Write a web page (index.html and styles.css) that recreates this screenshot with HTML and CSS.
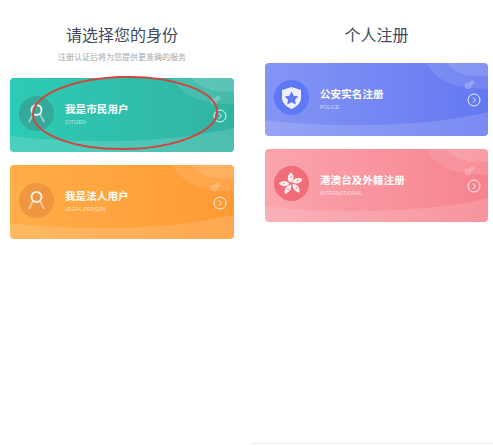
FILE: index.html
```html
<!DOCTYPE html>
<html lang="zh">
<head>
<meta charset="utf-8">
<title>注册</title>
<link rel="stylesheet" href="styles.css">
</head>
<body>
<main class="page">
  <section class="col col-left">
    <h1 class="title">请选择您的身份</h1>
    <p class="sub">注册认证后将为您提供更准确的服务</p>
    <div class="cards">
      <a class="card teal">
        <svg class="decor" viewBox="0 0 224 74" preserveAspectRatio="none"><path class="d1" d="M162 0C172 18 192 27 224 26V0Z"/><path class="d2" d="M182 0C190 11 206 15 224 13V0Z"/><circle class="d3" cx="204" cy="23" r="3.5"/><circle class="d3" cx="208" cy="20" r="2.5"/><path class="d4" d="M0 58C60 65 150 67 224 50V74H0Z"/></svg>
        <span class="badge"><svg viewBox="0 0 35 35"><circle class="w" cx="17.5" cy="14" r="5" fill="none" stroke-width="2"/><path class="w2" d="M14 18L10 26M21 18L25 26" fill="none" stroke-width="2"/></svg></span>
        <span class="txt"><b>我是市民用户</b><small>CITIZEN</small></span>
        <svg class="arrow" viewBox="0 0 14 14"><circle cx="7" cy="7" r="6"/><path d="M6 4.5L8.5 7L6 9.5"/></svg>
      </a>
      <a class="card orange">
        <svg class="decor" viewBox="0 0 224 74" preserveAspectRatio="none"><path class="d1" d="M162 0C172 18 192 27 224 26V0Z"/><path class="d2" d="M182 0C190 11 206 15 224 13V0Z"/><circle class="d3" cx="204" cy="23" r="3.5"/><circle class="d3" cx="208" cy="20" r="2.5"/><path class="d4" d="M0 58C60 65 150 67 224 50V74H0Z"/></svg>
        <span class="badge"><svg viewBox="0 0 35 35"><circle class="w" cx="17.5" cy="14" r="5" fill="none" stroke-width="2"/><path class="w2" d="M14 18L10 26M21 18L25 26" fill="none" stroke-width="2"/></svg></span>
        <span class="txt"><b>我是法人用户</b><small>LEGAL PERSON</small></span>
        <svg class="arrow" viewBox="0 0 14 14"><circle cx="7" cy="7" r="6"/><path d="M6 4.5L8.5 7L6 9.5"/></svg>
      </a>
    </div>
    <svg class="ring" viewBox="0 0 190 78"><ellipse cx="95" cy="39" rx="92" ry="36"/></svg>
  </section>
  <section class="col col-right">
    <h1 class="title">个人注册</h1>
    <div class="cards">
      <a class="card blue">
        <svg class="decor" viewBox="0 0 224 74" preserveAspectRatio="none"><path class="d1" d="M162 0C172 18 192 27 224 26V0Z"/><path class="d2" d="M182 0C190 11 206 15 224 13V0Z"/><circle class="d3" cx="204" cy="23" r="3.5"/><circle class="d3" cx="208" cy="20" r="2.5"/><path class="d4" d="M0 58C60 65 150 67 224 50V74H0Z"/></svg>
        <span class="badge"><svg viewBox="0 0 35 35"><path fill="#eef0ff" d="M17.5 7L27 10V18C27 23 22 27 17.5 29C13 27 8 23 8 18V10Z"/><path fill="#5f78f5" d="M17.5 11.5L19.7 15.8L24.4 16.5L21 19.8L21.8 24.5L17.5 22.3L13.2 24.5L14 19.8L10.6 16.5L15.3 15.8Z"/></svg></span>
        <span class="txt"><b>公安实名注册</b><small>POLICE</small></span>
        <svg class="arrow" viewBox="0 0 14 14"><circle cx="7" cy="7" r="6"/><path d="M6 4.5L8.5 7L6 9.5"/></svg>
      </a>
      <a class="card pink">
        <svg class="decor" viewBox="0 0 224 74" preserveAspectRatio="none"><path class="d1" d="M162 0C172 18 192 27 224 26V0Z"/><path class="d2" d="M182 0C190 11 206 15 224 13V0Z"/><circle class="d3" cx="204" cy="23" r="3.5"/><circle class="d3" cx="208" cy="20" r="2.5"/><path class="d4" d="M0 58C60 65 150 67 224 50V74H0Z"/></svg>
        <span class="badge"><svg viewBox="0 0 35 35"><g fill="#fdeef0"><path d="M16.5 16.5C12.5 14.5 13 9.5 17 6.5C20.5 9 20.5 14 16.5 16.5Z"/><path d="M18 16.5C19 12.5 24 11 28.5 13C27.5 17 22.5 19 18 16.5Z"/><path d="M18.5 18C22.5 17.5 26 21 25.5 26.5C21.5 26 18 22.5 18.5 18Z"/><path d="M17 18.5C18 22.5 15.5 26.5 11 28C9.5 24 12.5 19.5 17 18.5Z"/><path d="M15.5 17.5C13 21 8 21 5 17.5C7.5 14 12.5 14 15.5 17.5Z"/></g><g fill="#ef6e79"><circle cx="16.8" cy="11" r=".7"/><circle cx="23.5" cy="14.5" r=".7"/><circle cx="22.5" cy="22" r=".7"/><circle cx="14" cy="23.5" r=".7"/><circle cx="10" cy="17.5" r=".7"/></g></svg></span>
        <span class="txt"><b>港澳台及外籍注册</b><small>INTERNATIONAL</small></span>
        <svg class="arrow" viewBox="0 0 14 14"><circle cx="7" cy="7" r="6"/><path d="M6 4.5L8.5 7L6 9.5"/></svg>
      </a>
    </div>
  </section>
  <div class="rule"></div>
</main>
</body>
</html>
```
FILE: styles.css
```css
* { box-sizing: border-box; }
html, body { margin: 0; height: 100%; background: #fff; overflow: hidden; }
body { font-family: "Noto Sans CJK SC", "Liberation Sans", sans-serif; }
.page { position: relative; display: flex; width: 493px; height: 446px; padding: 0 5px 0 10px; gap: 31px; }
.col { position: relative; width: 224px; flex: none; }
.col-right { width: 223px; }
.title { margin: 22px 0 0; height: 24px; font-size: 16px; line-height: 24px; font-weight: 400; color: #3f4b5b; text-align: center; }
.sub { margin: 4px 0 0; height: 14px; font-size: 8px; line-height: 14px; color: #a3a8af; text-align: center; }
.cards { display: flex; flex-direction: column; gap: 13px; margin-top: 14px; }
.col-right .cards { margin-top: 17px; }
.card { position: relative; display: flex; align-items: center; height: 74px; padding: 0 7px 0 9px; border-radius: 4px; overflow: hidden; color: #fff; }
.col-right .card { height: 73px; }
.teal { background: linear-gradient(90deg, #2dcbb5, #32b3a2); }
.orange { background: linear-gradient(90deg, #ffae48, #ff9a35); }
.blue { background: linear-gradient(90deg, #8595f5, #6478f1); }
.pink { background: linear-gradient(90deg, #fba5ae, #f6838d); }
.decor { position: absolute; inset: 0; width: 100%; height: 100%; }
.d1 { fill: #fff; opacity: .1; }
.d2 { fill: #fff; opacity: .12; }
.d3 { fill: #fff; opacity: .2; }
.d4 { fill: #fff; opacity: .14; }
.badge { position: relative; flex: none; width: 35px; height: 35px; margin-top: -4px; border-radius: 50%; }
.badge svg { display: block; width: 35px; height: 35px; }
.teal .badge { background: #35a99a; }
.orange .badge { background: #f09540; }
.blue .badge { background: #5f78f5; }
.pink .badge { background: #ef6e79; }
.w { stroke: #fff; opacity: .9; }
.w2 { stroke: #fff; opacity: .45; }
.txt { position: relative; display: flex; flex-direction: column; flex: 1; margin: -3px 0 0 11px; }
.txt b { font-size: 10.5px; line-height: 15px; font-weight: 700; letter-spacing: .1px; }
.txt small { font-family: "Liberation Sans", sans-serif; font-size: 5px; line-height: 8px; margin-top: 2px; opacity: .65; letter-spacing: .2px; }
.arrow { position: relative; flex: none; width: 14px; height: 14px; margin-top: 1px; fill: none; stroke: #fff; stroke-width: 1; opacity: .9; }
.ring { position: absolute; left: 20px; top: 74px; width: 190px; height: 78px; fill: none; stroke: #d2453f; stroke-width: 2; transform: rotate(-1deg); }
.rule { position: absolute; left: 252px; right: 0; bottom: 2px; height: 1px; background: #ececec; }
```
